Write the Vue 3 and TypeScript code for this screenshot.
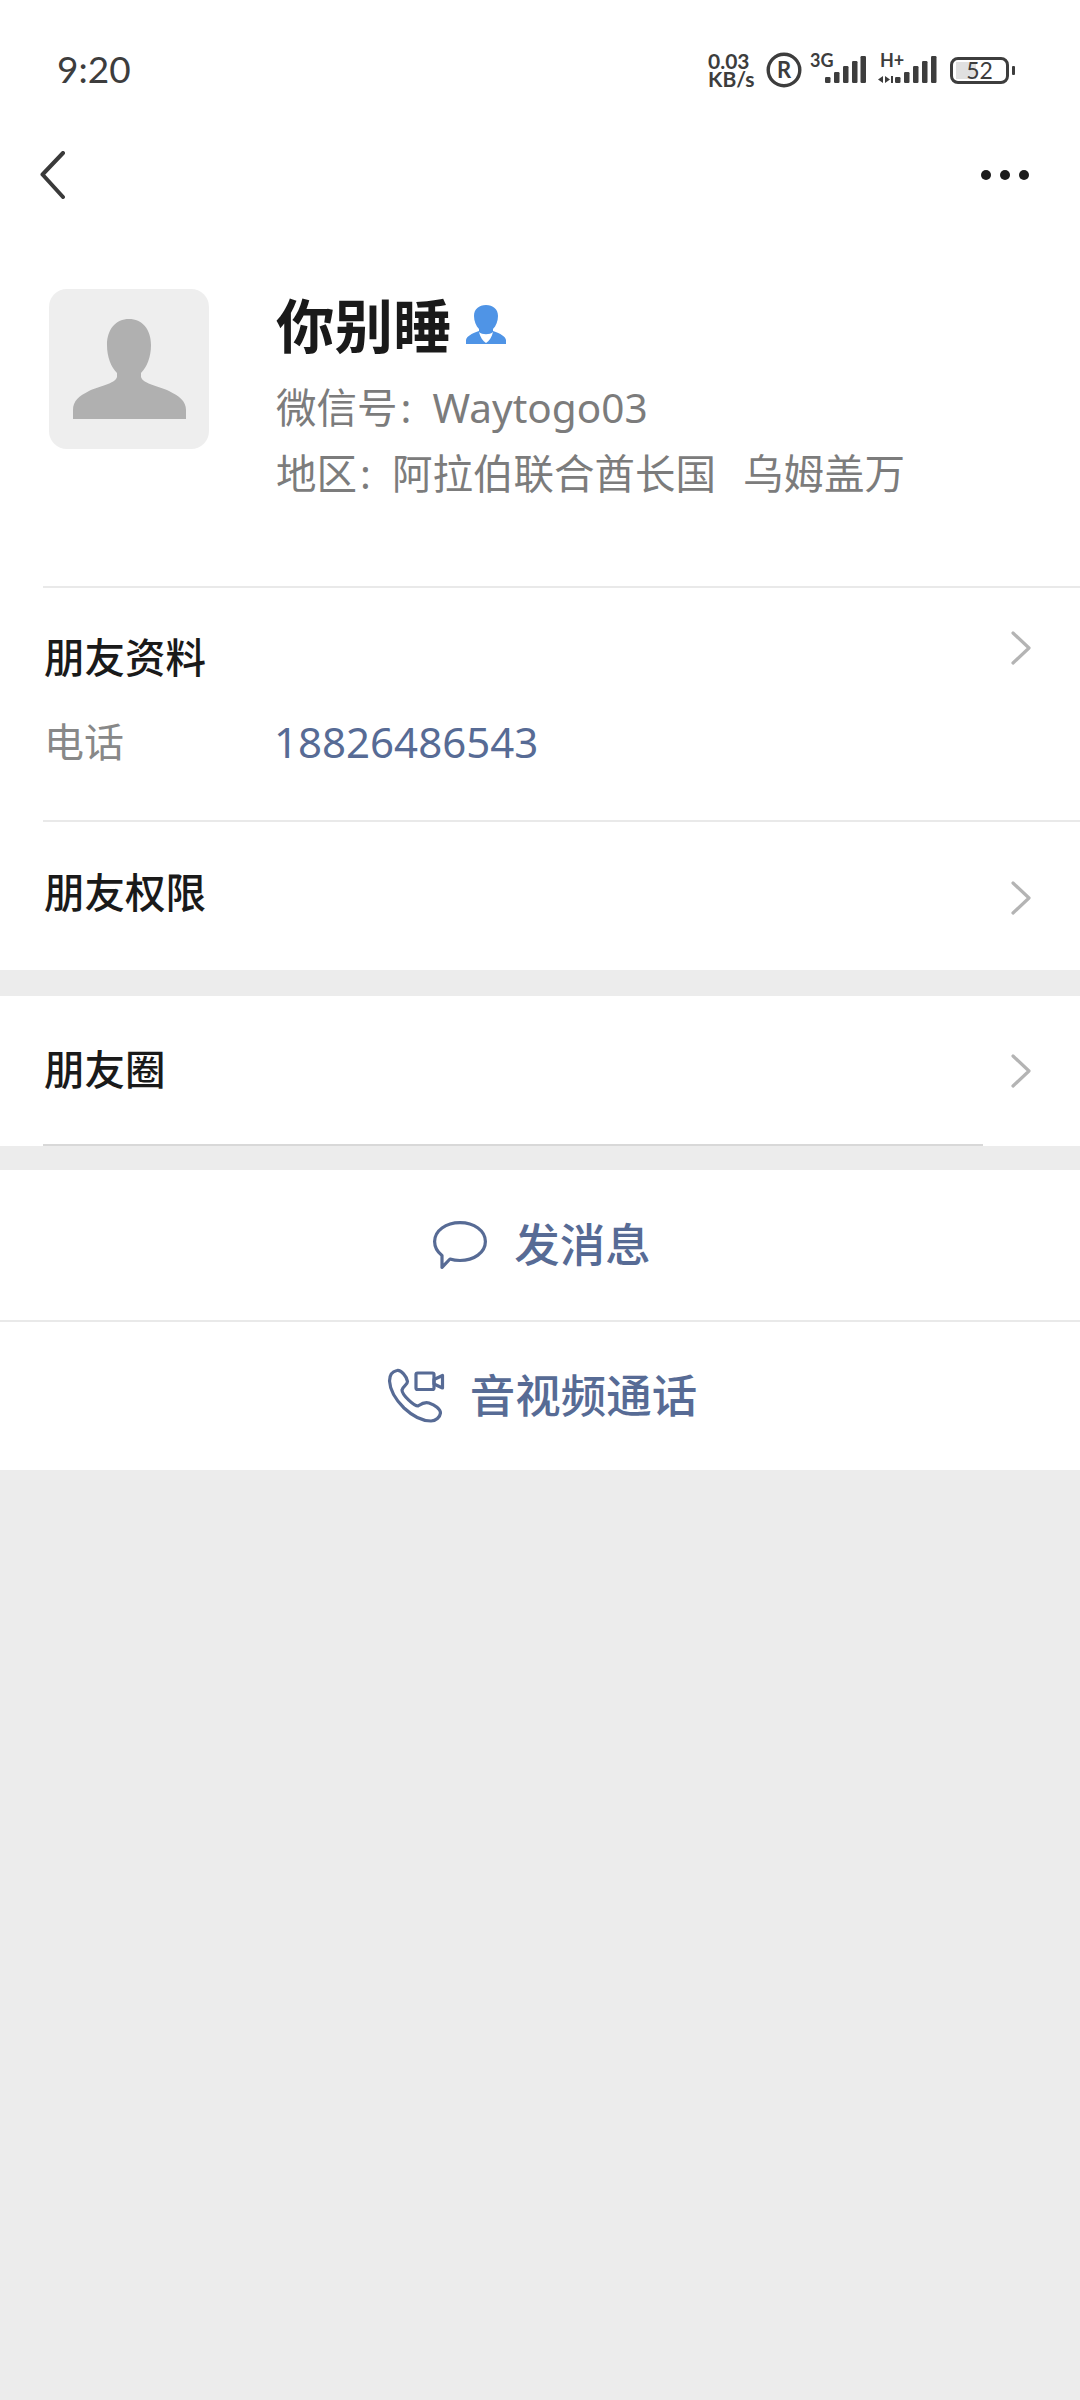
<script setup lang="ts">
// 资料页的各行
const phone = "18826486543";
const bars3g = [
  { x: 15, h: 6 },
  { x: 24, h: 11 },
  { x: 33, h: 17 },
  { x: 42, h: 22 },
  { x: 50.5, h: 27 },
];
const barsH = [
  { x: 17, h: 6 },
  { x: 26, h: 11 },
  { x: 35, h: 17 },
  { x: 44, h: 22 },
  { x: 53, h: 27 },
];
</script>

<template>
  <div class="page">
    <div class="status-bar">
      <span class="time">9:20</span>
      <div class="status-right">
        <div class="speed"><span>0.03</span><span>KB/s</span></div>
        <svg class="reg" width="36" height="36" viewBox="0 0 36 36">
          <circle cx="18" cy="18" r="15.8" fill="none" stroke="#3d3d3d" stroke-width="3.4" />
          <text x="18" y="25.5" text-anchor="middle" class="reg-text">R</text>
        </svg>
        <svg class="net" width="56" height="36" viewBox="0 0 56 36">
          <text x="0" y="19" class="net-text">3G</text>
          <rect v-for="b in bars3g" :key="b.x" :x="b.x" :y="35 - b.h" width="5.5" :height="b.h" rx="1.2" fill="#3d3d3d" />
        </svg>
        <svg class="net net-h" width="60" height="36" viewBox="0 0 60 36">
          <text x="2" y="19" class="net-text">H+</text>
          <path d="M0 31.500l5-3.500v7zM7 28l5 3.500-5 3.500zM13 28h2v7h-2z" fill="#3d3d3d" />
          <rect v-for="b in barsH" :key="b.x" :x="b.x" :y="35 - b.h" width="5.5" :height="b.h" rx="1.2" fill="#3d3d3d" />
        </svg>
        <div class="battery">
          <div class="battery-body">
            <span class="battery-fill"></span>
            <span class="battery-num">52</span>
          </div>
          <span class="battery-tip"></span>
        </div>
      </div>
    </div>

    <div class="nav">
      <svg width="26" height="48" viewBox="0 0 26 48">
        <path d="M23 2L2.500 23.500L23 46" fill="none" stroke="#3a3a3a" stroke-width="4" stroke-linecap="round" stroke-linejoin="round" />
      </svg>
      <div class="dots"><i></i><i></i><i></i></div>
    </div>

    <div class="profile">
      <div class="avatar">
        <svg width="160" height="160" viewBox="0 0 160 160">
          <path d="M24 130V121C24 112 30 107 40 102C50 97 66 95 68 88V84C62 78 58 68 58 56C58 40 67 30 80 30C93 30 102 40 102 56C102 68 98 78 92 84V88C94 95 110 97 120 102C130 107 137 112 137 121V130Z" fill="#b0b0b0" />
        </svg>
      </div>
      <div class="info">
        <div class="name-row">
          <span class="name">你别睡</span>
          <svg width="40" height="40" viewBox="0 0 40 40">
            <path d="M0 39V35C1 31 5 29 13 26V24C10 21 8 16 8 11C8 4 13 0 20 0C27 0 32 4 32 11C32 16 30 21 27 24V26C35 29 39 31 40 35V39Z" fill="#4f94e6" />
            <path d="M13 27C14 32 17 36 20 38C23 36 26 32 27 27C24 30 16 30 13 27Z" fill="#fff" />
          </svg>
        </div>
        <div class="meta wechat-id"><span class="label">微信号</span><span class="colon">:</span><span>Waytogo03</span></div>
        <div class="meta"><span class="label">地区</span><span class="colon">:</span><span class="region">阿拉伯联合酋长国</span><span>乌姆盖万</span></div>
      </div>
    </div>

    <div class="section first">
      <div class="row-top">
        <span class="title">朋友资料</span>
        <svg class="chevron" width="20" height="34" viewBox="0 0 20 34">
          <path d="M2 2L18 17L2 32" fill="none" stroke="#b4b4b4" stroke-width="3.200" stroke-linecap="round" stroke-linejoin="round" />
        </svg>
      </div>
      <div class="phone-row">
        <span class="phone-label">电话</span>
        <span class="phone">{{ phone }}</span>
      </div>
    </div>

    <div class="section plain">
      <span class="title">朋友权限</span>
      <svg class="chevron" width="20" height="34" viewBox="0 0 20 34">
        <path d="M2 2L18 17L2 32" fill="none" stroke="#b4b4b4" stroke-width="3.200" stroke-linecap="round" stroke-linejoin="round" />
      </svg>
    </div>

    <div class="section plain moments">
      <span class="title">朋友圈</span>
      <svg class="chevron" width="20" height="34" viewBox="0 0 20 34">
        <path d="M2 2L18 17L2 32" fill="none" stroke="#b4b4b4" stroke-width="3.200" stroke-linecap="round" stroke-linejoin="round" />
      </svg>
    </div>

    <div class="action msg">
      <svg width="54" height="48" viewBox="0 0 54 48">
        <path d="M27 1.600C41 1.600 52.400 9.500 52.400 20.500C52.400 31.500 41 39.500 27 39.500C23.500 39.500 20 39 17 38L9 46.400V34.500C4.500 31 1.600 26 1.600 20.500C1.600 9.500 13 1.600 27 1.600Z" fill="none" stroke="#576b95" stroke-width="3.200" stroke-linejoin="round" />
      </svg>
      <span>发消息</span>
    </div>
    <div class="action">
      <svg width="58" height="56" viewBox="0 0 58 56">
        <path d="M10 2.500C5 3.500 2.500 7.500 2.500 13C3 22 9 32 17 40C25 47.500 34 53 44 53C49 53 53 49 53.500 45C53.500 41 48 37 42 35C37 33.500 34 36 31 38C27 38 15 27 15 22C16 18 20.500 17 20.500 13.500C20 9 14 1.500 10 2.500Z" fill="none" stroke="#576b95" stroke-width="3.200" stroke-linejoin="round" />
        <rect x="29" y="5" width="18" height="16.500" rx="1.500" fill="none" stroke="#576b95" stroke-width="3.200" />
        <path d="M47 11.500L55.500 7.500V20L47 16Z" fill="none" stroke="#576b95" stroke-width="3.200" stroke-linejoin="round" />
      </svg>
      <span>音视频通话</span>
    </div>
  </div>
</template>

<style>
html,
body {
  margin: 0;
  background: #ececec;
}
</style>

<style scoped>
.page {
  width: 1080px;
  min-height: 2400px;
  background: #ececec;
  font-family: "Noto Sans", "Noto Sans CJK SC", sans-serif;
  display: flex;
  flex-direction: column;
}

.status-bar {
  height: 140px;
  box-sizing: border-box;
  background: #fff;
  display: flex;
  align-items: center;
  justify-content: space-between;
  padding: 0 65px 0 57px;
}

.time {
  font-family: Lato, sans-serif;
  font-size: 37px;
  color: #3d3d3d;
  padding-bottom: 4px;
}

.status-right {
  display: flex;
  align-items: center;
}

.speed {
  width: 48px;
  display: flex;
  flex-direction: column;
  font-family: Lato, sans-serif;
  font-weight: 700;
  font-size: 21px;
  line-height: 18px;
  color: #3d3d3d;
  margin-right: 10px;
  white-space: nowrap;
}

.reg-text {
  font-family: Lato, sans-serif;
  font-size: 22px;
  font-weight: 700;
  fill: #3d3d3d;
}

.net {
  margin-left: 8px;
  margin-bottom: 8px;
}

.net-h {
  margin-left: 12px;
}

.net-text {
  font-family: Lato, sans-serif;
  font-size: 18px;
  font-weight: 700;
  fill: #3d3d3d;
}

.battery {
  display: flex;
  align-items: center;
  margin-left: 12px;
}

.battery-body {
  position: relative;
  width: 59px;
  height: 27px;
  box-sizing: border-box;
  border: 3px solid #3d3d3d;
  border-radius: 8px;
  display: flex;
  align-items: center;
  justify-content: center;
}

.battery-fill {
  position: absolute;
  left: 3px;
  top: 2px;
  bottom: 2px;
  width: 20px;
  background: #e0e0e0;
}

.battery-num {
  position: relative;
  font-family: Lato, sans-serif;
  font-size: 23px;
  line-height: 21px;
  color: #3d3d3d;
}

.battery-tip {
  width: 3px;
  height: 9px;
  margin-left: 3px;
  background: #3d3d3d;
  border-radius: 1px;
}

.nav {
  height: 70px;
  background: #fff;
  display: flex;
  align-items: center;
  justify-content: space-between;
  padding: 0 51px 0 40px;
}

.dots {
  display: flex;
  gap: 9px;
}

.dots i {
  width: 10px;
  height: 10px;
  border-radius: 50%;
  background: #1a1a1a;
}

.profile {
  height: 376px;
  box-sizing: border-box;
  background: #fff;
  display: flex;
  align-items: flex-start;
  padding: 79px 0 0 49px;
}

.avatar {
  width: 160px;
  height: 160px;
  border-radius: 18px;
  background: #eeeeee;
  display: flex;
}

.info {
  margin-left: 67px;
  display: flex;
  flex-direction: column;
}

.name-row {
  display: flex;
  align-items: center;
  gap: 14px;
  height: 72px;
}

.name {
  font-size: 58.5px;
  font-weight: 700;
  color: #1a1a1a;
  line-height: 72px;
}

.meta {
  display: flex;
  font-size: 40.5px;
  line-height: 66px;
  color: #7c7c7c;
  white-space: nowrap;
}

.wechat-id {
  margin-top: 14px;
}

.colon {
  width: 35px;
  padding-left: 3px;
  box-sizing: border-box;
}

.region {
  margin-right: 27px;
}

.section {
  background: #fff;
  position: relative;
}

.section::before {
  content: "";
  position: absolute;
  left: 43px;
  right: 0;
  top: 0;
  height: 2px;
  background: #e9e9e9;
}

.first {
  height: 234px;
  box-sizing: border-box;
  padding: 0 49px 0 44px;
}

.row-top {
  height: 140px;
  display: flex;
  align-items: center;
  justify-content: space-between;
}

.title {
  font-size: 40.5px;
  font-weight: 500;
  color: #1a1a1a;
}

.row-top .title {
  padding-bottom: 2px;
}

.row-top .chevron {
  margin-top: -16px;
}

.phone-row {
  display: flex;
  align-items: center;
  height: 32px;
  line-height: 32px;
}

.phone-label {
  font-size: 40px;
  color: #888;
  width: 230px;
}

.phone {
  font-size: 42px;
  color: #576b95;
}

.plain {
  height: 150px;
  box-sizing: border-box;
  padding: 0 49px 0 44px;
  display: flex;
  align-items: center;
  justify-content: space-between;
}

.plain .title {
  padding-bottom: 10px;
}

.plain .chevron {
  margin-top: 6px;
}

.moments {
  margin-top: 26px;
}

.moments .title {
  padding-bottom: 8px;
}

.moments::before {
  display: none;
}

.moments::after {
  content: "";
  position: absolute;
  left: 43px;
  right: 97px;
  bottom: 0;
  height: 2px;
  background: #d8d8d8;
}

.moments .chevron {
  margin-top: 0;
}

.action {
  height: 150px;
  background: #fff;
  display: flex;
  align-items: center;
  justify-content: center;
  gap: 25px;
  font-size: 45.5px;
  font-weight: 500;
  color: #576b95;
  border-top: 2px solid #e9e9e9;
  box-sizing: border-box;
}

.action svg {
  margin-left: 4px;
}

.action span {
  padding-bottom: 6px;
}

.msg {
  margin-top: 24px;
  border-top: none;
  gap: 27px;
}
</style>
